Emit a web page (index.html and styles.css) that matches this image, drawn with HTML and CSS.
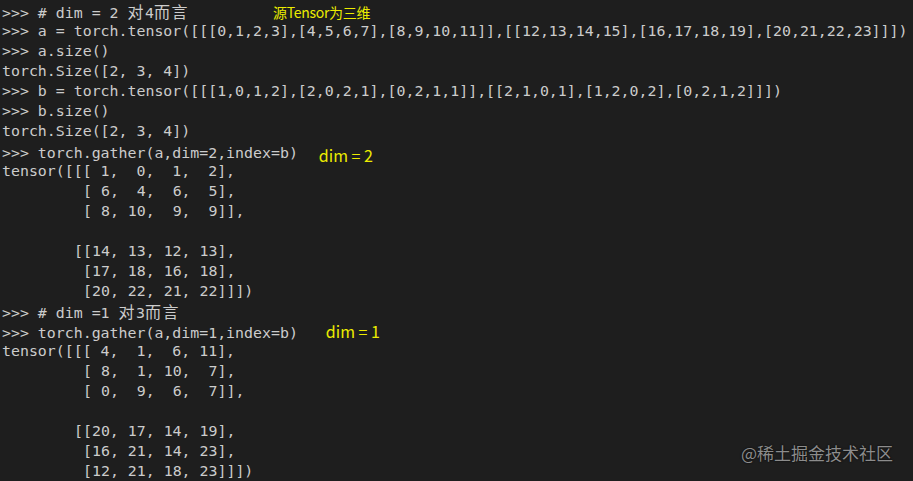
FILE: index.html
```html
<!DOCTYPE html>
<html lang="zh">
<head>
<meta charset="utf-8">
<title>torch.gather</title>
<link rel="stylesheet" href="styles.css">
</head>
<body>
<div class="term">
<div class="ln">&gt;&gt;&gt; # dim = 2 <span class="cjk">对</span>4<span class="cjk">而言</span><span class="note note-title">源Tensor为三维</span></div>
<div class="ln">&gt;&gt;&gt; a = torch.tensor([[[0,1,2,3],[4,5,6,7],[8,9,10,11]],[[12,13,14,15],[16,17,18,19],[20,21,22,23]]])</div>
<div class="ln">&gt;&gt;&gt; a.size()</div>
<div class="ln">torch.Size([2, 3, 4])</div>
<div class="ln">&gt;&gt;&gt; b = torch.tensor([[[1,0,1,2],[2,0,2,1],[0,2,1,1]],[[2,1,0,1],[1,2,0,2],[0,2,1,2]]])</div>
<div class="ln">&gt;&gt;&gt; b.size()</div>
<div class="ln">torch.Size([2, 3, 4])</div>
<div class="ln">&gt;&gt;&gt; torch.gather(a,dim=2,index=b)<span class="note note-d2">dim = 2</span></div>
<div class="ln">tensor([[[ 1,  0,  1,  2],</div>
<div class="ln i9">[ 6,  4,  6,  5],</div>
<div class="ln i9">[ 8, 10,  9,  9]],</div>
<div class="ln"></div>
<div class="ln i8">[[14, 13, 12, 13],</div>
<div class="ln i9">[17, 18, 16, 18],</div>
<div class="ln i9">[20, 22, 21, 22]]])</div>
<div class="ln">&gt;&gt;&gt; # dim =1 <span class="cjk">对</span>3<span class="cjk">而言</span></div>
<div class="ln">&gt;&gt;&gt; torch.gather(a,dim=1,index=b)<span class="note note-d1">dim = 1</span></div>
<div class="ln">tensor([[[ 4,  1,  6, 11],</div>
<div class="ln i9">[ 8,  1, 10,  7],</div>
<div class="ln i9">[ 0,  9,  6,  7]],</div>
<div class="ln"></div>
<div class="ln i8">[[20, 17, 14, 19],</div>
<div class="ln i9">[16, 21, 14, 23],</div>
<div class="ln i9">[12, 21, 18, 23]]])</div>
</div>
<div class="watermark">@稀土掘金技术社区</div>
</body>
</html>
```

FILE: styles.css
```css
html, body {
  margin: 0;
  padding: 0;
  background: #1e1e1e;
}
body {
  width: 913px;
  height: 481px;
  overflow: hidden;
  position: relative;
}
.term {
  padding: 1px 0 0 2px;
  font-family: "DejaVu Sans Mono", "Liberation Mono", monospace;
  font-size: 14.9px;
  color: #cccccc;
}
.ln {
  height: 20px;
  line-height: 20px;
  white-space: pre;
}
.i8 {
  padding-left: 72px;
}
.i9 {
  padding-left: 81px;
}
.cjk {
  font-family: "Noto Sans CJK SC", sans-serif;
  font-size: 16px;
  line-height: 20px;
  letter-spacing: 1.5px;
}
.note {
  font-family: "Noto Sans CJK SC", "Liberation Sans", sans-serif;
  color: #ecec00;
  white-space: pre;
  line-height: 20px;
}
.note-title {
  font-size: 14px;
  margin-left: 84px;
  letter-spacing: -0.3px;
}
.note-d2 {
  font-size: 16px;
  margin-left: 21px;
  position: relative;
  top: 4px;
}
.note-d1 {
  font-size: 16px;
  margin-left: 28px;
}
.watermark {
  position: absolute;
  right: 20px;
  bottom: 16px;
  font-family: "Noto Sans CJK SC", sans-serif;
  font-size: 17px;
  color: #8c8c8c;
  text-shadow: 0 0 2px #000;
  line-height: 24px;
}
```
